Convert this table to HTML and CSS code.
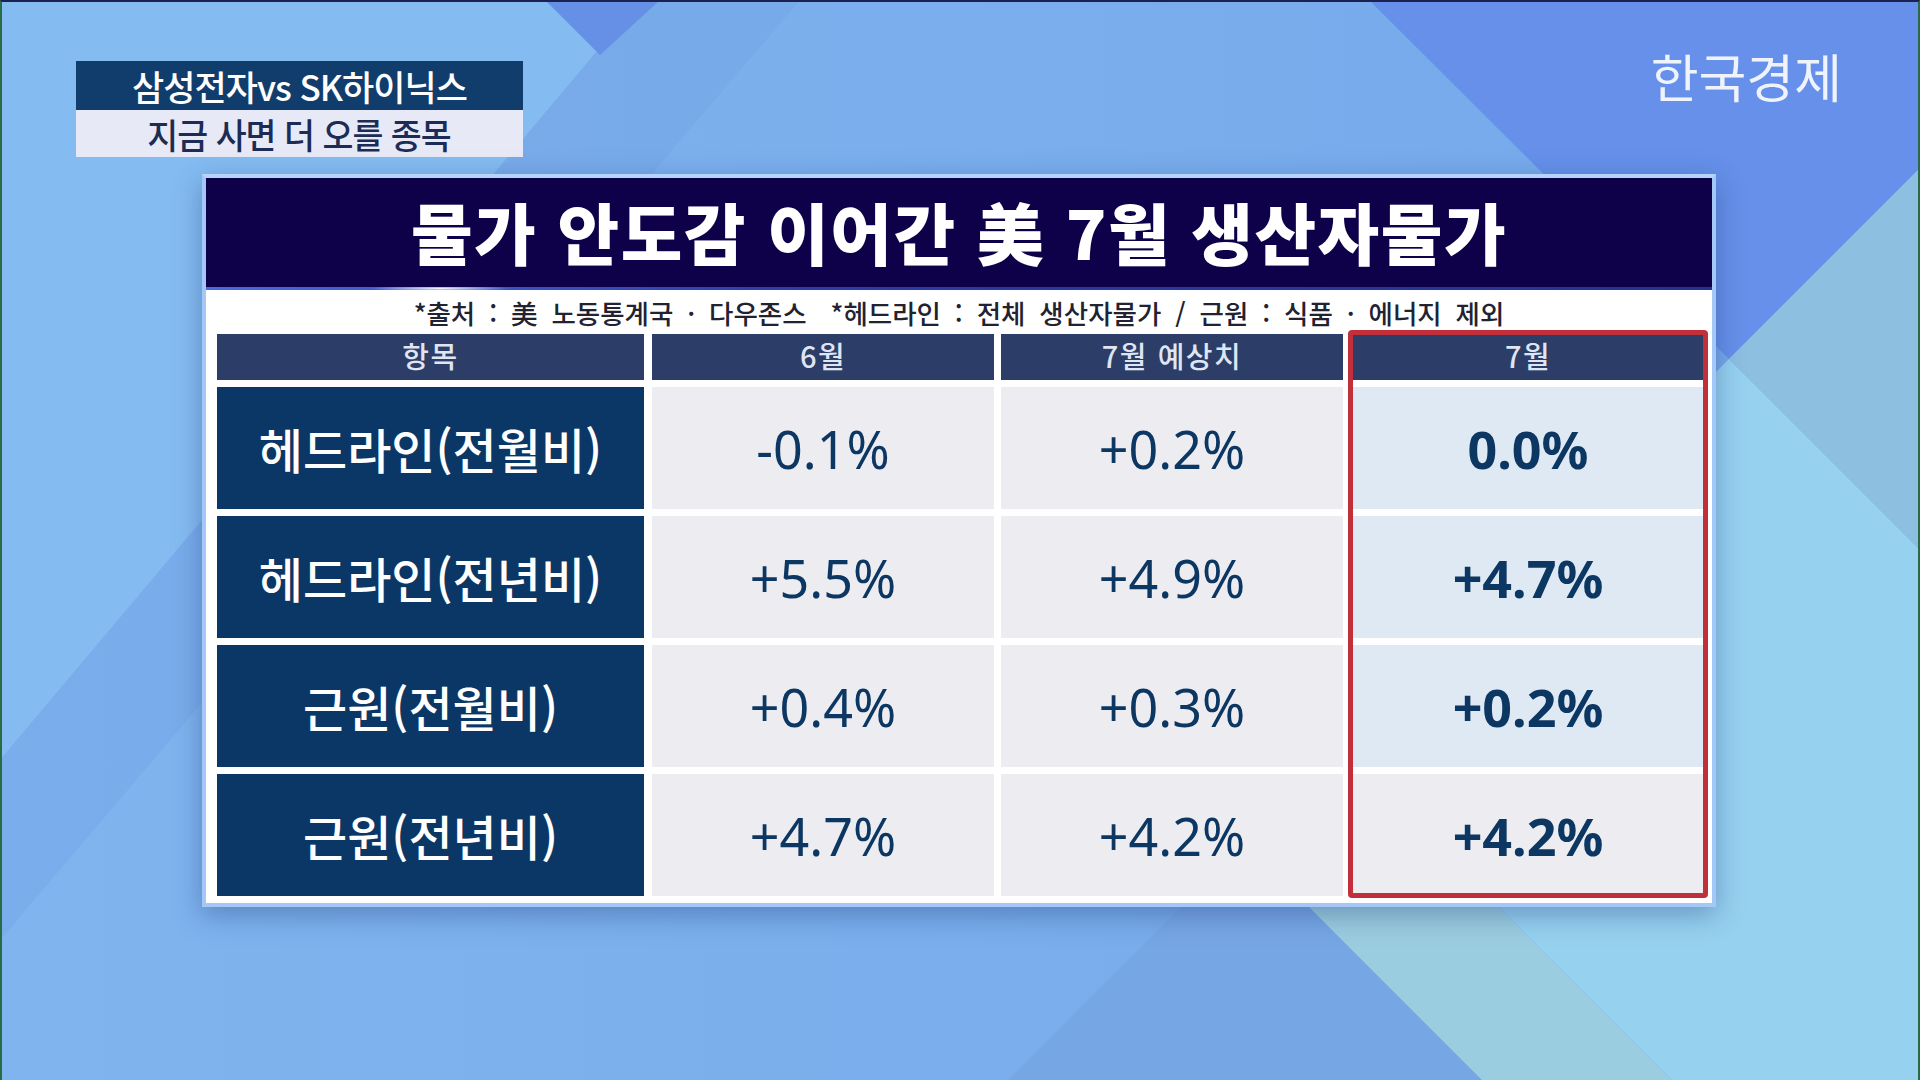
FILE: index.html
```html
<!DOCTYPE html>
<html lang="ko">
<head>
<meta charset="utf-8">
<title>물가 안도감 이어간 美 7월 생산자물가</title>
<link rel="stylesheet" href="styles.css">
</head>
<body>
<div class="screen">
  <svg class="bg" viewBox="0 0 1920 1080" preserveAspectRatio="none" aria-hidden="true">
    <defs>
      <linearGradient id="base" x1="0" y1="0" x2="1" y2="0">
        <stop offset="0" stop-color="#7fb4ee"/>
        <stop offset="0.5" stop-color="#7aaeec"/>
        <stop offset="1" stop-color="#76a8ea"/>
      </linearGradient>
    </defs>
    <rect width="1920" height="1080" fill="url(#base)"/>
    <polygon points="0,0 640,0 0,760" fill="#84bcf1"/>
    <polygon points="640,0 800,0 0,940 0,760" fill="#74a3e6" opacity="0.45"/>
    <polygon points="545,0 660,0 600,55" fill="#6590e6"/>
    <polygon points="1369,0 1920,0 1920,168 1729,359" fill="#6690e9"/>
    <polygon points="1245,843 1008,1080 1482,1080" fill="#77a6e4"/>
    <polygon points="1245,843 1340,748 1672,1080 1482,1080" fill="#9bcde0"/>
    <polygon points="1340,748 1729,359 1920,550 1920,1080 1672,1080" fill="#96d1f0"/>
    <polygon points="1729,359 1920,168 1920,550" fill="#8dbfe0"/>
  </svg>

  <div class="content">
    <header class="topbar">
      <div class="caption">
        <div class="caption-main"><span class="cond">삼성전자vs SK하이닉스</span></div>
        <div class="caption-sub"><span class="cond">지금 사면 더 오를 종목</span></div>
      </div>
      <div class="logo">한국경제</div>
    </header>

    <main class="panel">
      <h1 class="title">물가 안도감 이어간 美 7월 생산자물가</h1>
      <p class="source">*출처 : 美 노동통계국 · 다우존스<span class="sep"></span>*헤드라인 : 전체 생산자물가 / 근원 : 식품 · 에너지 제외</p>

      <div class="table">
        <div class="col col-item">
          <div class="head">항목</div>
          <div class="cell label">헤드라인(전월비)</div>
          <div class="cell label">헤드라인(전년비)</div>
          <div class="cell label">근원(전월비)</div>
          <div class="cell label">근원(전년비)</div>
        </div>
        <div class="col col-jun">
          <div class="head">6월</div>
          <div class="cell">-0.1%</div>
          <div class="cell">+5.5%</div>
          <div class="cell">+0.4%</div>
          <div class="cell">+4.7%</div>
        </div>
        <div class="col col-est">
          <div class="head">7월 예상치</div>
          <div class="cell">+0.2%</div>
          <div class="cell">+4.9%</div>
          <div class="cell">+0.3%</div>
          <div class="cell">+4.2%</div>
        </div>
        <div class="col col-jul">
          <div class="head">7월</div>
          <div class="cell hl">0.0%</div>
          <div class="cell hl">+4.7%</div>
          <div class="cell hl">+0.2%</div>
          <div class="cell">+4.2%</div>
        </div>
      </div>
    </main>
  </div>
</div>
</body>
</html>
```

FILE: styles.css
```css
html, body {
  margin: 0;
  padding: 0;
}

body {
  width: 1920px;
  height: 1080px;
  overflow: hidden;
  font-family: "Noto Sans CJK KR", "Noto Sans", sans-serif;
}

.screen {
  position: relative;
  width: 1920px;
  height: 1080px;
  overflow: hidden;
}

.screen::after {
  content: "";
  position: absolute;
  inset: 0;
  border-top: 2px solid #1b2150;
  border-left: 2px solid #2a6b45;
  border-right: 2px solid #2a6b45;
  pointer-events: none;
  z-index: 5;
}

.bg {
  position: absolute;
  inset: 0;
  width: 100%;
  height: 100%;
  z-index: 0;
}

.content {
  position: relative;
  z-index: 1;
  display: flex;
  flex-direction: column;
}

/* ---------- top bar ---------- */
.topbar {
  display: flex;
  justify-content: space-between;
  align-items: flex-start;
  padding: 61px 78px 0 76px;
}

.caption {
  width: 447px;
  display: flex;
  flex-direction: column;
}

.caption-main,
.caption-sub {
  display: flex;
  align-items: center;
  justify-content: center;
  font-size: 35px;
  font-weight: 500;
  white-space: nowrap;
}

.caption-main {
  height: 49px;
  background: #113d6d;
  color: #ffffff;
}

.caption-sub {
  height: 47px;
  background: #e8e9f6;
  color: #1d2c55;
}

.cond {
  display: inline-block;
  letter-spacing: -1px;
  line-height: 1;
}

.caption-sub .cond {
  transform: scaleX(0.96);
}

.logo {
  margin-top: -11px;
  font-size: 52px;
  line-height: 52px;
  font-weight: 400;
  color: #eef3fc;
}

/* ---------- panel ---------- */
.panel {
  margin: 17px 0 0 202px;
  width: 1514px;
  box-sizing: border-box;
  border: 4px solid #a3c8f7;
  border-top-color: #b4d4fa;
  background: #ffffff;
  box-shadow: 0 8px 26px rgba(20, 45, 110, 0.35);
  padding-bottom: 7px;
}

.title {
  position: relative;
  margin: 0;
  height: 112px;
  padding-bottom: 8px;
  box-sizing: border-box;
  background: #0e0049;
  color: #ffffff;
  font-size: 67px;
  font-weight: 900;
  letter-spacing: 1.5px;
  display: flex;
  align-items: center;
  justify-content: center;
  white-space: nowrap;
}

.title::after {
  content: "";
  position: absolute;
  left: 0;
  right: 0;
  bottom: 0;
  height: 3px;
  background:
    radial-gradient(ellipse 70px 3px at 234px 50%, #eef4ff, rgba(238, 244, 255, 0)),
    linear-gradient(90deg, #4a68e0, #2c3ca8 40%, #25328f);
}

.source {
  margin: 0;
  height: 44px;
  display: flex;
  align-items: center;
  justify-content: center;
  font-size: 26.5px;
  font-weight: 500;
  color: #222230;
  word-spacing: 6.5px;
  white-space: nowrap;
}

.sep {
  display: inline-block;
  width: 24px;
}

/* ---------- table ---------- */
.table {
  display: flex;
  padding: 0 9px 0 11px;
}

.col {
  display: flex;
  flex-direction: column;
  gap: 7px;
}

.col-item { width: 427px; }
.col-jun  { width: 342px; margin-left: 8px; }
.col-est  { width: 342px; margin-left: 7px; }
.col-jul  { width: 350px; margin-left: 10px; position: relative; }

.col-jul::after {
  content: "";
  position: absolute;
  top: -4px;
  bottom: -2px;
  left: -5px;
  right: -5px;
  border: 5px solid #c1303a;
  border-radius: 4px;
  pointer-events: none;
}

.head {
  height: 46px;
  padding-bottom: 4px;
  box-sizing: border-box;
  background: #2c3e68;
  color: #dfe5f2;
  font-size: 29px;
  font-weight: 500;
  letter-spacing: 1.5px;
  display: flex;
  align-items: center;
  justify-content: center;
  white-space: nowrap;
}

.cell {
  height: 122px;
  display: flex;
  align-items: center;
  justify-content: center;
  background: #edecf1;
  color: #0d3763;
  font-family: "Noto Sans", "Noto Sans CJK KR", sans-serif;
  font-size: 52px;
  font-weight: 400;
  white-space: nowrap;
}

.cell.label {
  background: #0b3766;
  color: #ffffff;
  font-family: "Noto Sans CJK KR", "Noto Sans", sans-serif;
  font-size: 48px;
  font-weight: 500;
  letter-spacing: 0;
}

.col-jul .cell {
  font-weight: 700;
}

.col-jul .cell.hl {
  background: #dfe9f4;
}
```
